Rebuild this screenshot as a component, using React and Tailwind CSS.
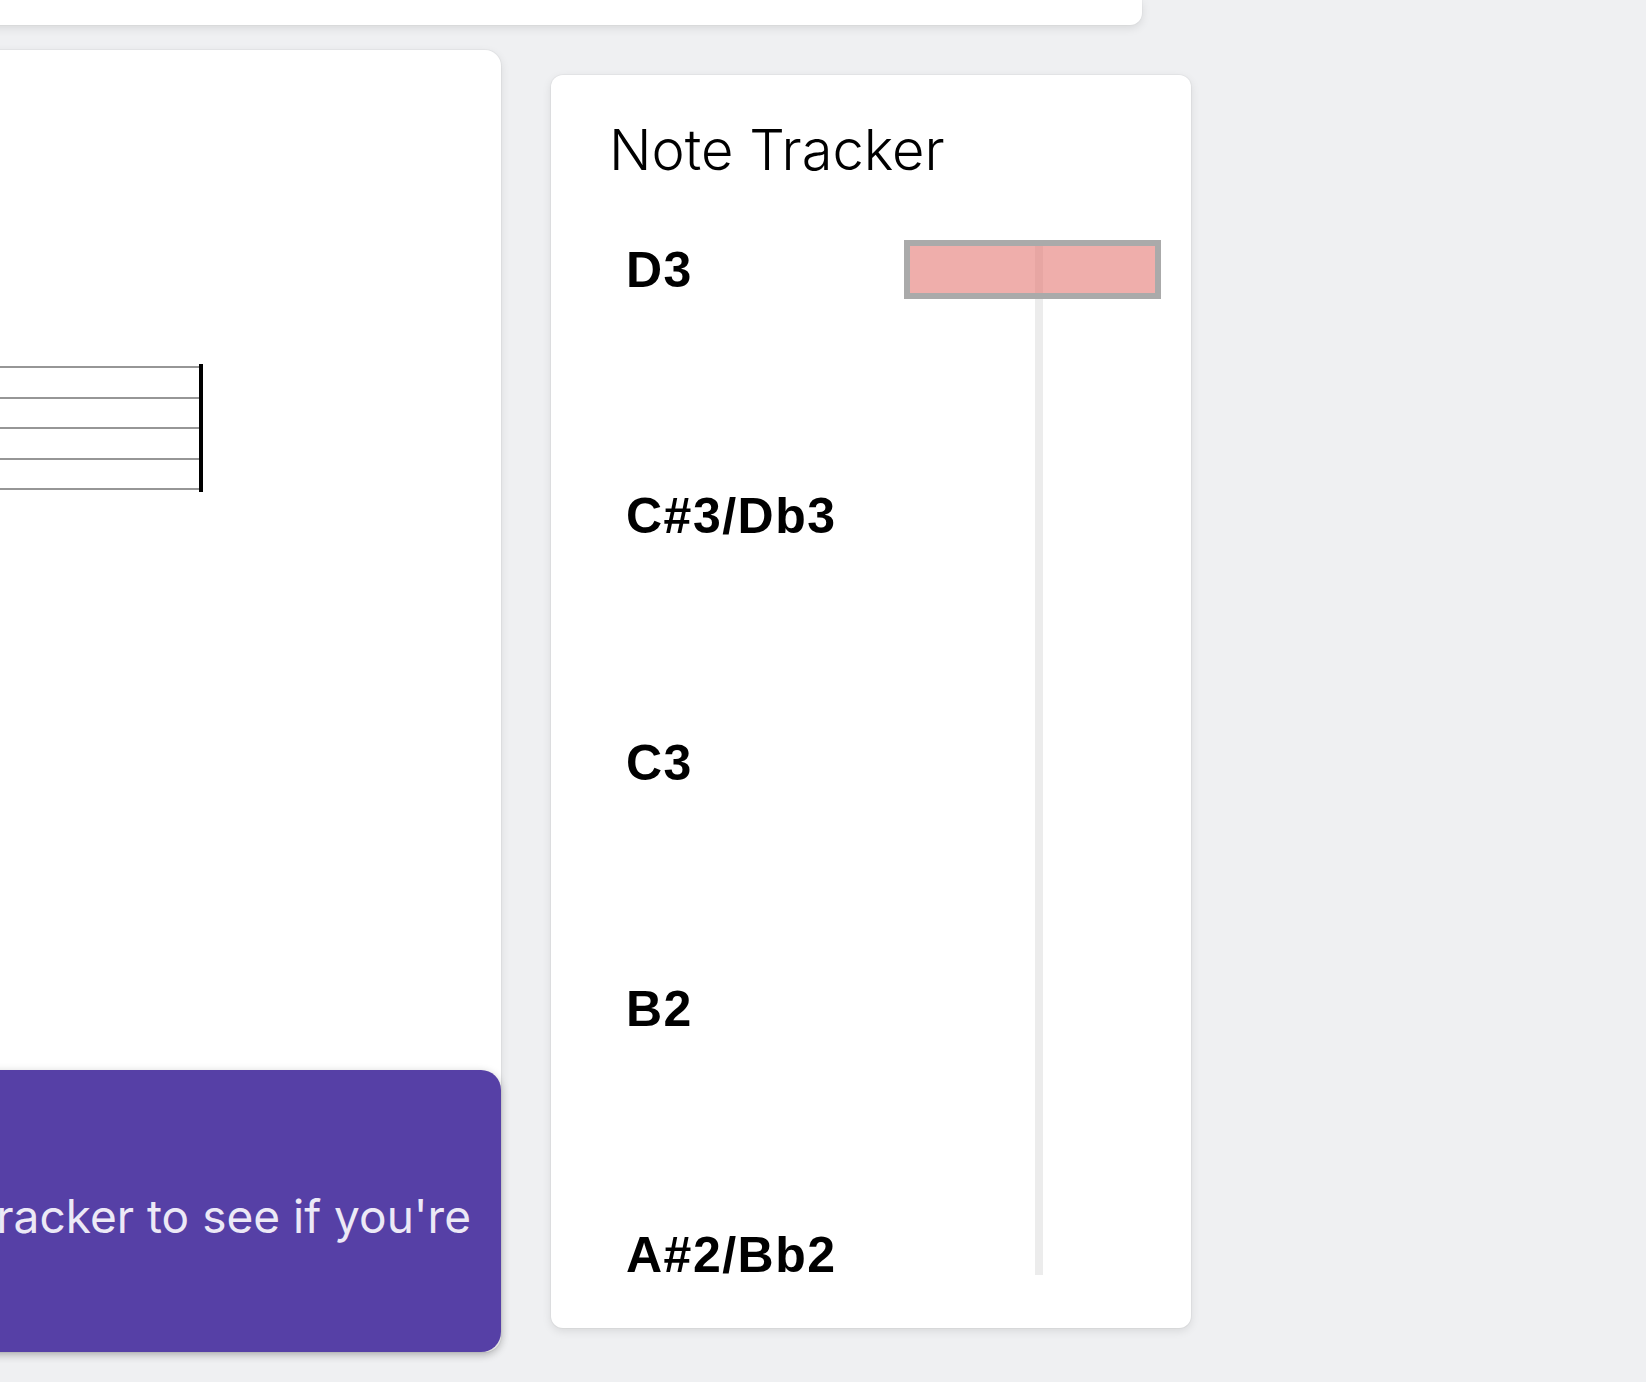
export default function App() {
  const notes = ["D3", "C#3/Db3", "C3", "B2", "A#2/Bb2"];

  return (
    <div className="h-[1382px] w-[1646px] overflow-hidden bg-[#eff0f2] font-['Inter',sans-serif]">
      {/* header card, mostly scrolled out of view */}
      <div className="-ml-[20px] h-[25px] w-[1162px] rounded-b-xl bg-white shadow-[0_0_0_1px_rgba(0,0,0,0.02),0_3px_10px_rgba(0,0,0,0.10)]" />

      <div className="-ml-[300px] mt-[25px] flex items-start gap-[50px]">
        {/* sheet music card */}
        <div className="flex h-[1302px] w-[801px] flex-col rounded-2xl bg-white shadow-[0_0_0_1px_rgba(0,0,0,0.03),0_3px_10px_rgba(0,0,0,0.10)]">
          <div className="ml-[103px] mt-[314px] flex h-[128px] w-[400px]">
            <div className="flex flex-1 flex-col justify-between py-[2px]">
              <div className="h-[2px] bg-[#969696]" />
              <div className="h-[2px] bg-[#969696]" />
              <div className="h-[2px] bg-[#969696]" />
              <div className="h-[2px] bg-[#969696]" />
              <div className="h-[2px] bg-[#969696]" />
            </div>
            <div className="w-[4px] bg-black" />
          </div>

          <div className="mt-auto flex h-[282px] items-center justify-end overflow-hidden rounded-[20px] bg-[#5640a6] pr-[30px] pt-[10px] shadow-[0_2px_8px_rgba(0,0,0,0.22)]">
            <p className="whitespace-nowrap text-[46px] font-normal leading-none text-[#ece9f6]">
              tracker to see if you're
            </p>
          </div>
        </div>

        {/* note tracker card */}
        <div className="mt-[25px] h-[1253px] w-[640px] rounded-xl bg-white shadow-[0_0_0_1px_rgba(0,0,0,0.03),0_3px_10px_rgba(0,0,0,0.10)]">
          <h2 className="pl-[58px] pt-[47px] text-[56px] font-light leading-none text-black">
            Note Tracker
          </h2>

          <div className="relative mt-[67px] flex h-[1035px] flex-col justify-between pl-[75px]">
            {/* pitch track */}
            <div className="absolute bottom-[5px] left-[484px] top-[-5px] w-[8px] bg-[#ececec]" />
            {/* current pitch marker */}
            <div className="absolute left-[353px] top-[-5px] h-[59px] w-[257px] border-[6px] border-[#aaaaaa] bg-[rgba(227,115,110,0.58)]" />

            {notes.map((n) => (
              <div
                key={n}
                className="relative font-['Liberation_Sans',Arial,sans-serif] text-[50px] font-bold leading-none tracking-[1.5px] text-black"
              >
                {n}
              </div>
            ))}
          </div>
        </div>
      </div>
    </div>
  );
}
